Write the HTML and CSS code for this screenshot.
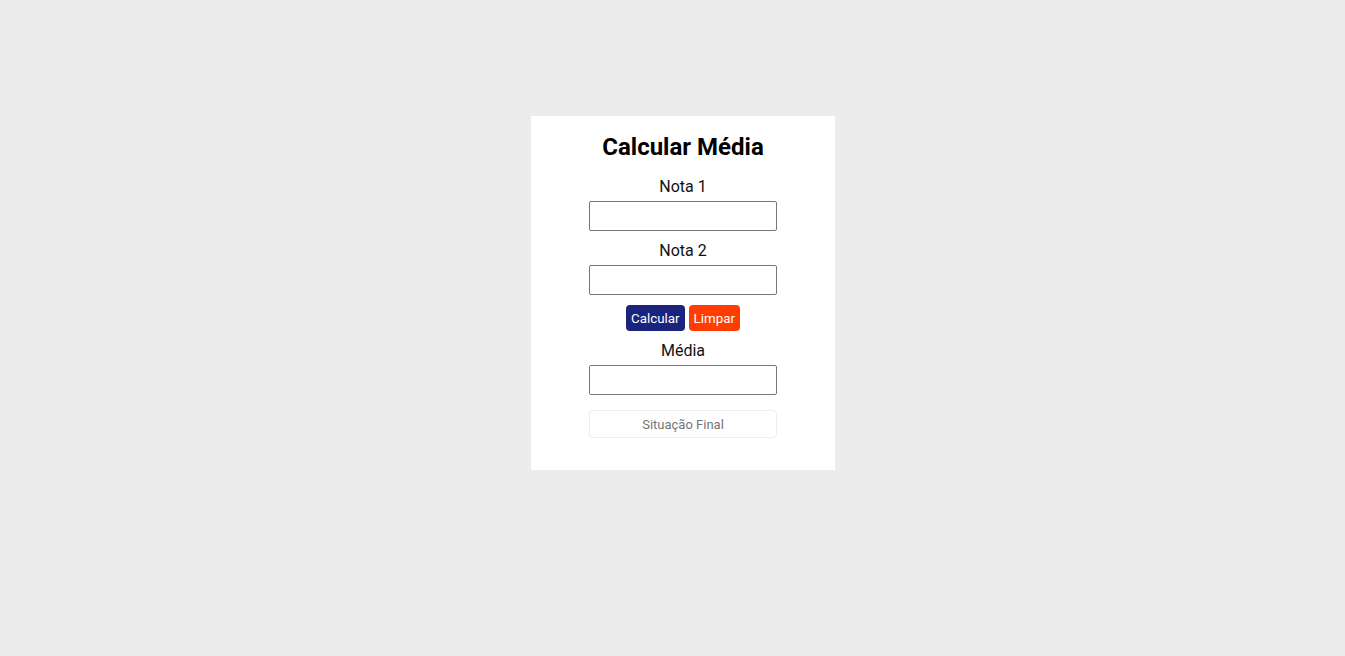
FILE: index.html
```html
<!DOCTYPE html>
<html lang="pt-BR">
<head>
<meta charset="utf-8">
<title>Calcular Média</title>
<link rel="stylesheet" href="styles.css">
</head>
<body>
<main class="card">
  <h1 class="title">Calcular Média</h1>
  <label class="label" for="n1">Nota 1</label>
  <input class="field" id="n1" type="text">
  <label class="label" for="n2">Nota 2</label>
  <input class="field" id="n2" type="text">
  <div class="actions">
    <button class="btn btn-calc">Calcular</button>
    <button class="btn btn-clear">Limpar</button>
  </div>
  <label class="label" for="m">Média</label>
  <input class="field" id="m" type="text">
  <div class="status">Situação Final</div>
</main>
</body>
</html>
```
FILE: styles.css
```css
html, body {
  margin: 0;
  padding: 0;
  background: #ececec;
  font-family: Roboto, "Liberation Sans", sans-serif;
}
body {
  display: flex;
  justify-content: center;
  align-items: flex-start;
  padding-top: 116px;
  padding-left: 21px;
  min-height: 656px;
  box-sizing: border-box;
}
.card {
  width: 304px;
  box-sizing: border-box;
  background: #fff;
  padding: 17px 0 32px;
  display: flex;
  flex-direction: column;
  align-items: center;
}
.title {
  margin: 0 0 16px;
  font-size: 24px;
  font-weight: 700;
  line-height: 28px;
  color: #000;
}
.label {
  font-size: 16px;
  line-height: 19px;
  color: #111;
  margin-bottom: 5px;
}
.field {
  width: 188px;
  height: 30px;
  box-sizing: border-box;
  border: 1px solid #767676;
  border-radius: 2px;
  margin: 0 0 10px;
  padding: 0 4px;
  background: #fff;
}
.actions {
  display: flex;
  gap: 4px;
  margin: 0 0 10px;
}
.btn {
  height: 26px;
  border: none;
  border-radius: 4px;
  color: #fff;
  font-family: Roboto, "Liberation Sans", sans-serif;
  font-weight: 400;
  font-size: 13.333px;
  padding: 0 5px;
  cursor: pointer;
}
.btn-calc { background: #1a237e; }
.btn-clear { background: #ff3d00; }
.status {
  width: 188px;
  height: 28px;
  box-sizing: border-box;
  margin-top: 5px;
  border: 1px solid #ececec;
  border-radius: 4px;
  display: flex;
  align-items: center;
  justify-content: center;
  font-size: 13px;
  color: #757575;
}
```
